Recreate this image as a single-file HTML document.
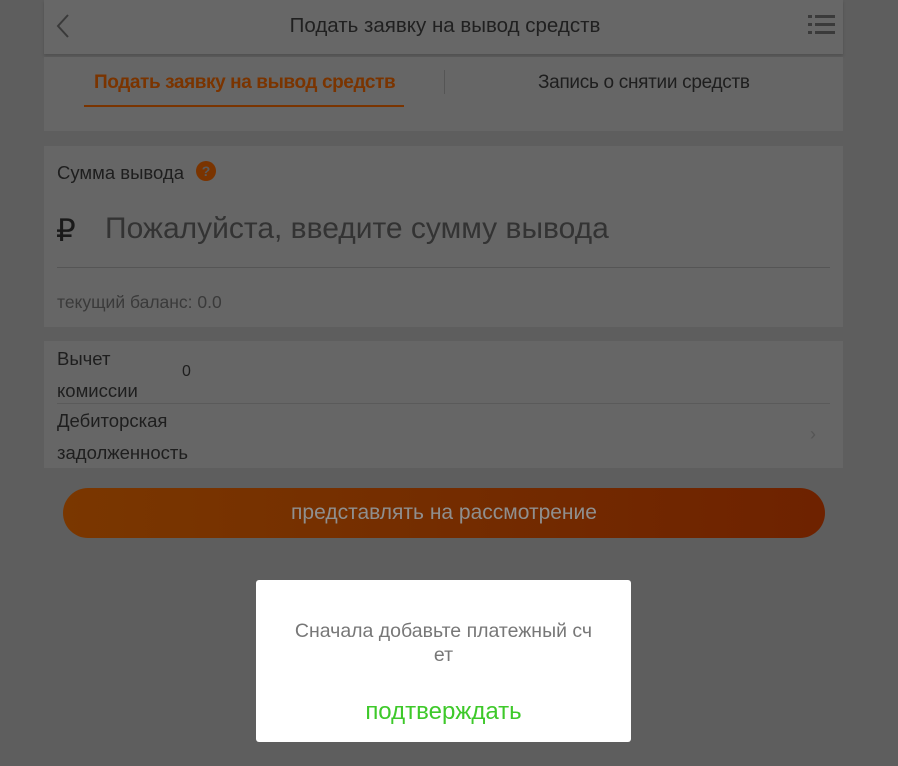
<!DOCTYPE html>
<html><head><meta charset="utf-8"><style>
body{margin:0;width:898px;height:766px;background:#5e5e5e;font-family:"Liberation Sans",sans-serif;position:relative;overflow:hidden}
.p{position:absolute;left:44px;width:799px;background:#666}
.t{position:absolute;white-space:nowrap}
</style></head><body>
<div class="p" style="top:0;height:54px;background:#676767;box-shadow:0 2px 3px rgba(0,0,0,.15)"></div>
<svg class="t" style="left:55px;top:13px" width="16" height="26"><path d="M13 2L3 13l10 11" stroke="#3a3a3a" stroke-width="2" fill="none"/></svg>
<div class="t" style="left:0;width:890px;text-align:center;top:14px;font-size:20.5px;color:#202020">Подать заявку на вывод средств</div>
<svg class="t" style="left:808px;top:15px" width="28" height="22"><g fill="#3a3a3a"><rect x="0" y="0" width="4" height="3"/><rect x="7" y="0" width="20" height="3"/><rect x="0" y="8" width="4" height="3"/><rect x="7" y="8" width="20" height="3"/><rect x="0" y="16" width="4" height="3"/><rect x="7" y="16" width="20" height="3"/></g></svg>
<div class="p" style="top:57px;height:74px"></div>
<div class="t" style="left:94px;top:72px;font-size:19px;font-weight:bold;color:#7a3400;letter-spacing:-0.4px">Подать заявку на вывод средств</div>
<div class="t" style="left:84px;top:105px;width:320px;height:2px;background:#7a3400"></div>
<div class="t" style="left:444px;top:70px;width:1px;height:24px;background:#555"></div>
<div class="t" style="left:538px;top:72px;font-size:19px;color:#1e1e1e;letter-spacing:-0.3px">Запись о снятии средств</div>
<div class="p" style="top:146px;height:181px"></div>
<div class="t" style="left:57px;top:162px;font-size:18.5px;color:#1e1e1e">Сумма вывода</div>
<div class="t" style="left:196px;top:161px;width:20px;height:20px;border-radius:50%;background:#7a3400;color:#5a5a5a;font-size:14px;font-weight:bold;text-align:center;line-height:20px">?</div>
<div class="t" style="left:56px;top:213px;font-size:31px;color:#1a1a1a">₽</div>
<div class="t" style="left:105px;top:212px;font-size:30px;color:#333">Пожалуйста, введите сумму вывода</div>
<div class="t" style="left:57px;top:267px;width:773px;height:1px;background:#555"></div>
<div class="t" style="left:57px;top:292px;font-size:17.5px;color:#3a3a3a">текущий баланс: 0.0</div>
<div class="p" style="top:341px;height:127px"></div>
<div class="t" style="left:57px;top:343px;font-size:18.5px;color:#1e1e1e;line-height:32px">Вычет<br>комиссии</div>
<div class="t" style="left:182px;top:363px;font-size:16px;color:#1e1e1e">0</div>
<div class="t" style="left:57px;top:403px;width:773px;height:1px;background:#5a5a5a"></div>
<div class="t" style="left:57px;top:405px;font-size:18.5px;color:#1e1e1e;line-height:32px">Дебиторская<br>задолженность</div>
<div class="t" style="left:810px;top:424px;font-size:18px;color:#555">›</div>
<div class="t" style="left:63px;top:488px;width:762px;height:50px;border-radius:25px;background:linear-gradient(90deg,#7a3700,#6e2200);color:#8f8f8f;font-size:21px;text-align:center;line-height:50px">представлять на рассмотрение</div>
<div class="t" style="left:256px;top:580px;width:375px;height:162px;background:#fff;border-radius:3px"></div>
<div class="t" style="left:256px;top:619px;width:375px;text-align:center;font-size:19.5px;color:#777;line-height:24px">Сначала добавьте платежный сч<br>ет</div>
<div class="t" style="left:256px;top:698px;width:375px;text-align:center;font-size:24px;color:#3ec92a">подтверждать</div>
</body></html>
